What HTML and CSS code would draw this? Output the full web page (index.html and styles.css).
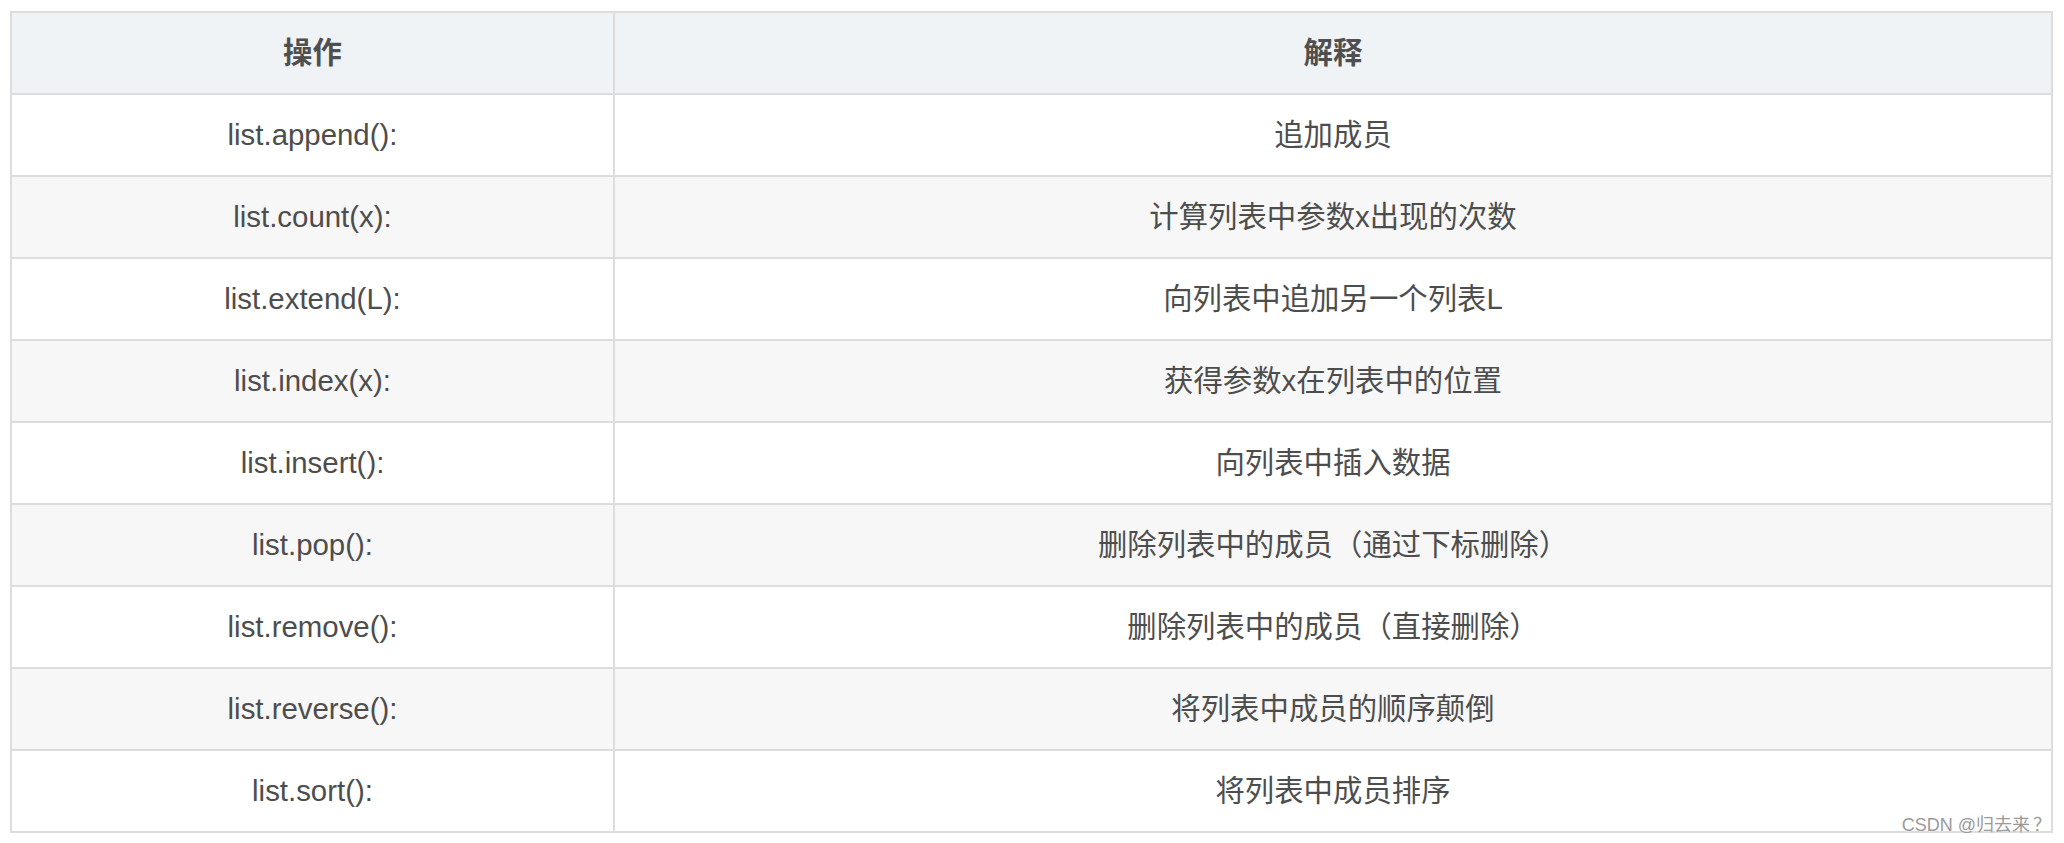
FILE: index.html
```html
<!DOCTYPE html>
<html lang="zh-CN">
<head>
<meta charset="utf-8">
<title>list 操作</title>
<link rel="stylesheet" href="styles.css">
</head>
<body>
<div class="wrap">
  <table class="ops">
    <thead>
      <tr><th class="c1">操作</th><th class="c2">解释</th></tr>
    </thead>
    <tbody>
      <tr><td>list.append():</td><td>追加成员</td></tr>
      <tr><td>list.count(x):</td><td>计算列表中参数x出现的次数</td></tr>
      <tr><td>list.extend(L):</td><td>向列表中追加另一个列表L</td></tr>
      <tr><td>list.index(x):</td><td>获得参数x在列表中的位置</td></tr>
      <tr><td>list.insert():</td><td>向列表中插入数据</td></tr>
      <tr><td>list.pop():</td><td>删除列表中的成员（通过下标删除）</td></tr>
      <tr><td>list.remove():</td><td>删除列表中的成员（直接删除）</td></tr>
      <tr><td>list.reverse():</td><td>将列表中成员的顺序颠倒</td></tr>
      <tr><td>list.sort():</td><td>将列表中成员排序</td></tr>
    </tbody>
  </table>
  <div class="watermark">CSDN @归去来<span class="q">？</span></div>
</div>
</body>
</html>
```
FILE: styles.css
```css
html, body {
  margin: 0;
  padding: 0;
  background: #ffffff;
}
body {
  padding: 11px 0 0 10px;
  font-family: "Liberation Sans", Arial, "Noto Sans CJK SC", sans-serif;
  color: #4d4d4d;
}
.wrap {
  position: relative;
  width: 2043px;
}
.ops {
  width: 2043px;
  table-layout: fixed;
  border-collapse: separate;
  border-spacing: 0;
  border-top: 2px solid #dddddd;
  border-left: 2px solid #dddddd;
  font-size: 29.4px;
}
.ops th, .ops td {
  height: 80px;
  padding: 0;
  border-right: 2px solid #dddddd;
  border-bottom: 2px solid #dddddd;
  text-align: center;
  vertical-align: middle;
  line-height: 1.2;
}
.ops .c1 {
  width: 601px;
}
.ops th {
  background: #eff3f5;
  font-weight: bold;
  color: #4f4f4f;
}
.ops tbody tr:nth-child(even) td {
  background: #f7f7f7;
}
.watermark {
  position: absolute;
  right: 2px;
  bottom: -1px;
  font-size: 18px;
  line-height: 18px;
  color: #9a9a9a;
  text-shadow: 0 0 1px #ffffff, 0 0 1px #ffffff;
  white-space: nowrap;
}
.watermark .q {
  font-family: "Noto Sans CJK SC", sans-serif;
  margin-left: 3px;
}
```
